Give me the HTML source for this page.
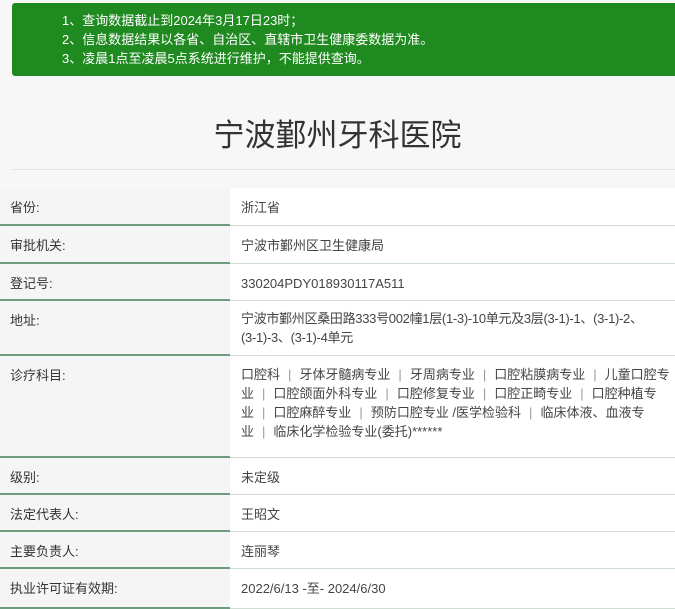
<!DOCTYPE html>
<html><head><meta charset="utf-8"><style>
body{margin:0;width:675px;height:601px;overflow:hidden;background:#f7f7f7;font-family:"Liberation Sans","Noto Sans CJK SC",sans-serif;color:#333;font-size:13px;position:relative}
.banner{position:absolute;left:12px;top:3px;width:670px;height:73px;background:#1f8a1f;border-radius:3px;color:#fff;font-size:13px;line-height:19px;padding-top:8px;box-sizing:border-box;padding-left:50px}
h1{position:absolute;top:114px;left:0;width:675px;text-align:center;margin:0;font-weight:normal;font-size:31px;color:#333;line-height:44px}
.hr{position:absolute;top:169px;left:12px;right:0;height:1px;background:#e6e6e6}
.row{position:absolute;left:0;width:675px;border-bottom:1px solid #cfdcd3;box-sizing:border-box}
.row .l{position:absolute;left:0;top:0;bottom:-1px;width:230px;background:#f4f5f4;border-bottom:2px solid #6f9c7c;box-sizing:border-box;padding:9px 0 0 10px}
.row .v{position:absolute;left:230px;top:0;bottom:0;right:0;background:#fff;padding:10px 0 0 11px;line-height:19px;color:#444;white-space:nowrap}
.s{color:#999;padding:0 8px}
</style></head><body>
<div class="banner">1、查询数据截止到2024年3月17日23时；<br>2、信息数据结果以各省、自治区、直辖市卫生健康委数据为准。<br>3、凌晨1点至凌晨5点系统进行维护，不能提供查询。</div>
<h1>宁波鄞州牙科医院</h1>
<div class="hr"></div>
<div class="row" style="top:188px;height:38px"><div class="l">省份:</div><div class="v">浙江省</div></div>
<div class="row" style="top:226px;height:38px"><div class="l">审批机关:</div><div class="v">宁波市鄞州区卫生健康局</div></div>
<div class="row" style="top:264px;height:37px"><div class="l">登记号:</div><div class="v">330204PDY018930117A511</div></div>
<div class="row" style="top:301px;height:55px"><div class="l">地址:</div><div class="v" style="padding-top:8px;letter-spacing:-0.3px">宁波市鄞州区桑田路333号002幢1层(1-3)-10单元及3层(3-1)-1、(3-1)-2、<br>(3-1)-3、(3-1)-4单元</div></div>
<div class="row" style="top:356px;height:102px"><div class="l">诊疗科目:</div><div class="v" style="padding-top:9px">口腔科<span class="s">|</span>牙体牙髓病专业<span class="s">|</span>牙周病专业<span class="s">|</span>口腔粘膜病专业<span class="s">|</span>儿童口腔专<br>业<span class="s">|</span>口腔颌面外科专业<span class="s">|</span>口腔修复专业<span class="s">|</span>口腔正畸专业<span class="s">|</span>口腔种植专<br>业<span class="s">|</span>口腔麻醉专业<span class="s">|</span>预防口腔专业 /医学检验科<span class="s">|</span>临床体液、血液专<br>业<span class="s">|</span>临床化学检验专业(委托)******</div></div>
<div class="row" style="top:458px;height:37px"><div class="l">级别:</div><div class="v">未定级</div></div>
<div class="row" style="top:495px;height:37px"><div class="l">法定代表人:</div><div class="v">王昭文</div></div>
<div class="row" style="top:532px;height:37px"><div class="l">主要负责人:</div><div class="v">连丽琴</div></div>
<div class="row" style="top:569px;height:40px"><div class="l">执业许可证有效期:</div><div class="v">2022/6/13 -至- 2024/6/30</div></div>
</body></html>
